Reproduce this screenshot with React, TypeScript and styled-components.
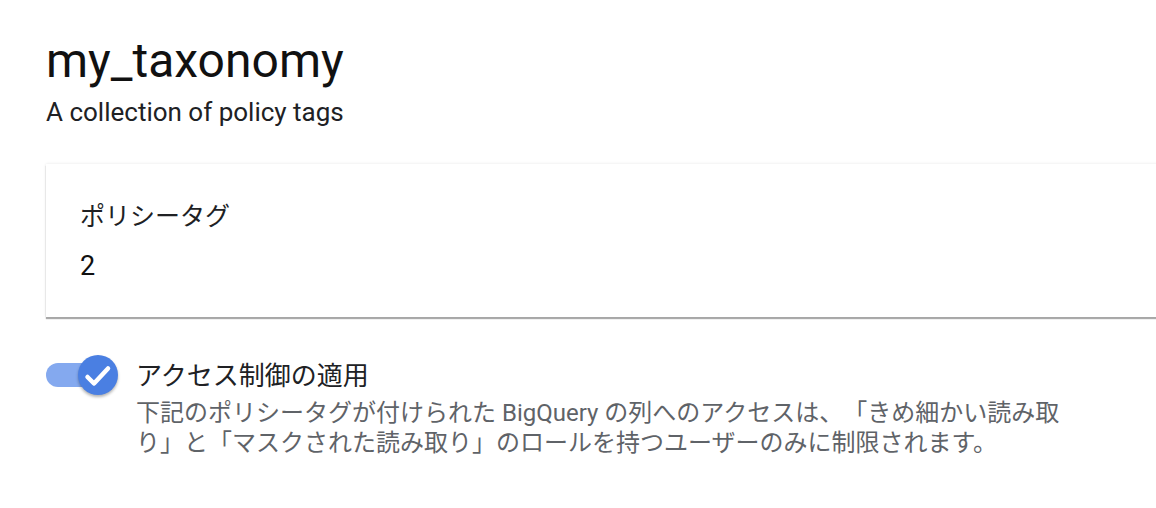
import * as React from 'react'
import styled, { createGlobalStyle } from 'styled-components'

const fontStack = `Roboto, 'Noto Sans CJK JP', 'Noto Sans', sans-serif`

const GlobalStyle = createGlobalStyle`
  html, body {
    margin: 0;
    padding: 0;
    background: #fff;
  }
  body {
    font-family: ${fontStack};
    color: #202124;
    overflow: hidden;
    text-spacing-trim: space-all;
  }
`

const Page = styled.div`
  width: 1156px;
  height: 508px;
  box-sizing: border-box;
  padding: 33px 0 0 46px;
  overflow: hidden;
`

const Title = styled.h1`
  margin: 0;
  font-size: 48px;
  line-height: 56px;
  font-weight: 400;
  color: #111;
`

const Subtitle = styled.div`
  margin-top: 7px;
  font-size: 26px;
  line-height: 32px;
  color: #202124;
`

const Card = styled.div`
  margin-top: 36px;
  width: 1200px;
  height: 153px;
  box-sizing: border-box;
  padding: 37px 0 0 34px;
  background: #fff;
  box-shadow: 0 2px 1px rgba(0, 0, 0, 0.32), 0 0 3px rgba(0, 0, 0, 0.1);
`

const CardLabel = styled.div`
  font-size: 25px;
  line-height: 32px;
  color: #202124;
`

const CardValue = styled.div`
  margin-top: 15px;
  font-size: 27px;
  line-height: 36px;
  color: #111;
`

const ToggleRow = styled.div`
  display: flex;
  align-items: flex-start;
  gap: 18px;
  margin-top: 38px;
`

const Switch = styled.div`
  display: flex;
  align-items: center;
  width: 72px;
  height: 40px;
  flex-shrink: 0;
`

const Track = styled.div`
  width: 62px;
  height: 24px;
  border-radius: 12px;
  background: #84a9ef;
`

const Thumb = styled.div`
  display: flex;
  align-items: center;
  justify-content: center;
  width: 40px;
  height: 40px;
  margin-left: -30px;
  border-radius: 50%;
  background: #4a7fe2;
  box-shadow: 0 2px 3px rgba(0, 0, 0, 0.3);
`

const ToggleText = styled.div`
  display: flex;
  flex-direction: column;
  padding-top: 5px;
`

const ToggleLabel = styled.div`
  font-size: 26px;
  line-height: 32px;
  color: #202124;
`

const ToggleHint = styled.div`
  margin-top: 6px;
  width: 930px;
  font-size: 24px;
  line-height: 30px;
  color: #5f6368;
`

const Check = () => (
  <svg width="40" height="40" viewBox="0 0 40 40">
    <path
      d="M9.5 22 L16 28.5 L30 13.5"
      fill="none"
      stroke="#fff"
      strokeWidth="4.5"
      strokeLinecap="round"
      strokeLinejoin="round"
    />
  </svg>
)

export default function App() {
  return (
    <Page>
      <GlobalStyle />
      <Title>my_taxonomy</Title>
      <Subtitle>A collection of policy tags</Subtitle>
      <Card>
        <CardLabel>ポリシータグ</CardLabel>
        <CardValue>2</CardValue>
      </Card>
      <ToggleRow>
        <Switch>
          <Track />
          <Thumb>
            <Check />
          </Thumb>
        </Switch>
        <ToggleText>
          <ToggleLabel>アクセス制御の適用</ToggleLabel>
          <ToggleHint>
            下記のポリシータグが付けられた BigQuery の列へのアクセスは、「きめ細かい読み取り」と「マスクされた読み取り」のロールを持つユーザーのみに制限されます。
          </ToggleHint>
        </ToggleText>
      </ToggleRow>
    </Page>
  )
}
